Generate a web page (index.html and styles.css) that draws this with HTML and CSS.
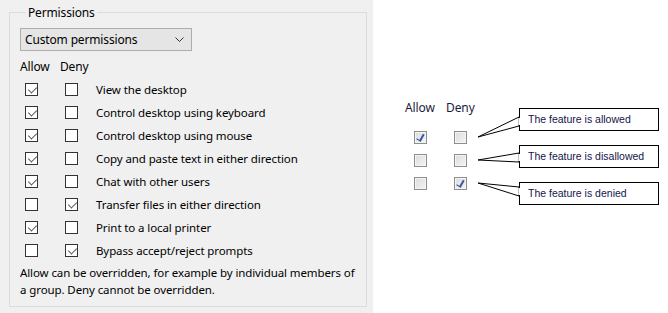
FILE: index.html
```html
<!DOCTYPE html>
<html>
<head>
<meta charset="utf-8">
<link rel="stylesheet" href="styles.css">
</head>
<body>
<div class="page">
  <div class="panel">
    <fieldset class="group">
      <legend class="legend">Permissions</legend>
      <div class="combo">
        <span>Custom permissions</span>
        <svg class="chev" width="9" height="5" viewBox="0 0 9 5"><path d="M0.5 0.5 L4.5 4.5 L8.5 0.5" fill="none" stroke="#333" stroke-width="1"/></svg>
      </div>
      <div class="grid">
        <div class="hdr">Allow</div><div class="hdr">Deny</div><div></div>

        <div class="cell"><span class="cb on"></span></div><div class="cell"><span class="cb"></span></div><div class="lbl">View the desktop</div>
        <div class="cell"><span class="cb on"></span></div><div class="cell"><span class="cb"></span></div><div class="lbl">Control desktop using keyboard</div>
        <div class="cell"><span class="cb on"></span></div><div class="cell"><span class="cb"></span></div><div class="lbl">Control desktop using mouse</div>
        <div class="cell"><span class="cb on"></span></div><div class="cell"><span class="cb"></span></div><div class="lbl">Copy and paste text in either direction</div>
        <div class="cell"><span class="cb on"></span></div><div class="cell"><span class="cb"></span></div><div class="lbl">Chat with other users</div>
        <div class="cell"><span class="cb"></span></div><div class="cell"><span class="cb on"></span></div><div class="lbl">Transfer files in either direction</div>
        <div class="cell"><span class="cb on"></span></div><div class="cell"><span class="cb"></span></div><div class="lbl">Print to a local printer</div>
        <div class="cell"><span class="cb"></span></div><div class="cell"><span class="cb on"></span></div><div class="lbl">Bypass accept/reject prompts</div>
      </div>
      <p class="note">Allow can be overridden, for example by individual members of a group. Deny cannot be overridden.</p>
    </fieldset>
  </div>
  <div class="legendarea">
    <div class="diagram">
      <span class="dh dh-allow">Allow</span>
      <span class="dh dh-deny">Deny</span>

      <span class="wb wb-a1 on"></span><span class="wb wb-d1"></span>
      <span class="wb wb-a2"></span><span class="wb wb-d2"></span>
      <span class="wb wb-a3"></span><span class="wb wb-d3 on"></span>

      <div class="callout c1">The feature is allowed</div>
      <div class="callout c2">The feature is disallowed</div>
      <div class="callout c3">The feature is denied</div>

      <svg class="pointers" width="295" height="313" viewBox="0 0 295 313">
        <polygon points="146,117 105,137 146,126" fill="#fff" stroke="#000" stroke-width="1"/>
        <polygon points="146,153 105,160 146,162" fill="#fff" stroke="#000" stroke-width="1"/>
        <polygon points="146,187 105,183 146,196" fill="#fff" stroke="#000" stroke-width="1"/>
        <line x1="146.5" y1="118" x2="146.5" y2="125" stroke="#fff" stroke-width="2"/>
        <line x1="146.5" y1="154" x2="146.5" y2="161" stroke="#fff" stroke-width="2"/>
        <line x1="146.5" y1="188" x2="146.5" y2="195" stroke="#fff" stroke-width="2"/>
      </svg>
    </div>
  </div>
</div>
</body>
</html>
```

FILE: styles.css
```css
html, body {
  margin: 0;
  padding: 0;
  background: #ffffff;
}

.page {
  display: flex;
  width: 668px;
  height: 313px;
  font-family: "Noto Sans", "Open Sans", sans-serif;
  font-size: 11.5px;
  letter-spacing: -0.1px;
  color: #000;
}

.panel {
  width: 373px;
  height: 313px;
  background: #f0f0f0;
  box-sizing: border-box;
  padding: 5px 0 0 9px;
}

.group {
  margin: 0;
  width: 358px;
  height: 302px;
  box-sizing: border-box;
  border: 1px solid #dcdcdc;
  padding: 8px 10px 0 10px;
  min-width: 0;
}

.legend {
  padding: 0 2px;
  margin-left: 6px;
  line-height: 15px;
  font-size: 12px;
  letter-spacing: -0.15px;
}

.combo {
  width: 172px;
  height: 23px;
  box-sizing: border-box;
  border: 1px solid #adadad;
  background: #e5e5e5;
  display: flex;
  align-items: center;
  justify-content: space-between;
  padding: 0 7px 0 4px;
  font-size: 12px;
  letter-spacing: -0.15px;
}

.chev {
  display: block;
}

.grid {
  display: grid;
  grid-template-columns: 40px 36px 1fr;
  grid-template-rows: 21px;
  grid-auto-rows: 23px;
  margin-top: 6px;
}

.hdr {
  line-height: 20px;
  height: 20px;
  font-size: 12px;
  letter-spacing: -0.15px;
}

.cell {
  display: flex;
  align-items: center;
  padding-left: 5px;
}

.lbl {
  display: flex;
  align-items: center;
  white-space: nowrap;
}

.cb {
  display: block;
  width: 13px;
  height: 13px;
  box-sizing: border-box;
  border: 1px solid #333333;
  background: #ffffff;
  position: relative;
}

.cb.on::after {
  content: "";
  position: absolute;
  left: 2px;
  top: 0px;
  width: 7px;
  height: 4px;
  border-left: 1px solid #555;
  border-bottom: 1px solid #555;
  transform: translate(0.5px, 2.5px) rotate(-45deg);
}

.note {
  margin: 2px 0 0 0;
  line-height: 17px;
  width: 336px;
}

.legendarea {
  flex: 1;
  position: relative;
}

.diagram {
  position: relative;
  width: 295px;
  height: 313px;
}

.dh {
  position: absolute;
  top: 100px;
  color: #1b1b3c;
  font-size: 12px;
  line-height: 16px;
}

.dh-allow { left: 32px; }
.dh-deny { left: 73px; }

.wb {
  position: absolute;
  width: 13px;
  height: 13px;
  box-sizing: border-box;
  border: 1px solid #8e8e8e;
  background: linear-gradient(135deg, #dcdcdc 0%, #f4f4f4 100%);
  box-shadow: inset 0 0 0 1px #f4f4f4;
}

.wb.on::after {
  content: "";
  position: absolute;
  left: 3px;
  top: 1px;
  width: 3px;
  height: 7px;
  border-right: 2px solid #3d56a6;
  border-bottom: 1px solid #3d56a6;
  transform: rotate(30deg);
}

.wb-a1 { left: 41px; top: 131px; }
.wb-d1 { left: 81px; top: 131px; }
.wb-a2 { left: 41px; top: 154px; }
.wb-d2 { left: 81px; top: 154px; }
.wb-a3 { left: 41px; top: 177px; }
.wb-d3 { left: 81px; top: 177px; }

.callout {
  position: absolute;
  left: 146px;
  width: 140px;
  height: 23px;
  box-sizing: border-box;
  border: 1px solid #000;
  background: #fff;
  font-family: "Liberation Sans", Arial, sans-serif;
  font-size: 10.5px;
  letter-spacing: 0;
  color: #14144a;
  line-height: 21px;
  padding-left: 8px;
  white-space: nowrap;
}

.c1 { top: 108px; }
.c2 { top: 145px; }
.c3 { top: 182px; }

.pointers {
  position: absolute;
  left: 0;
  top: 0;
}
```
